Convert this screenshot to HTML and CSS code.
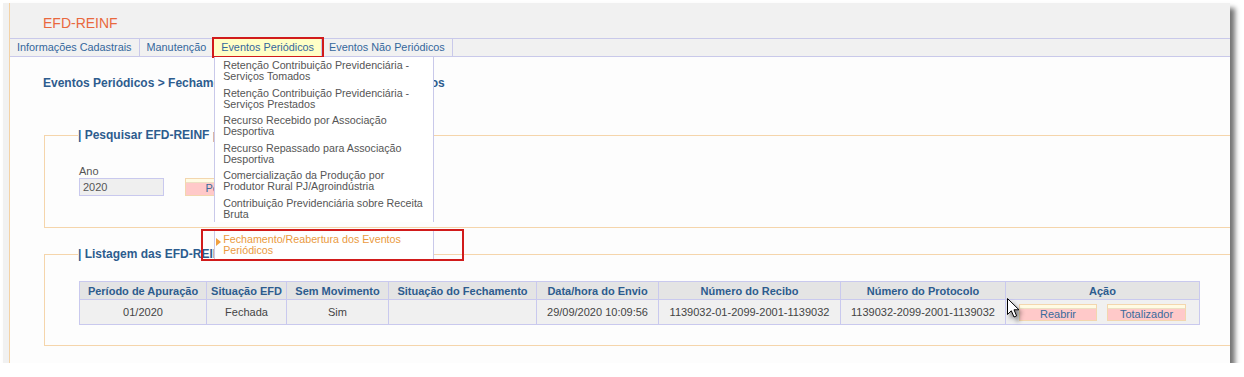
FILE: index.html
```html
<!DOCTYPE html>
<html lang="pt-BR">
<head>
  <meta charset="UTF-8">
  <title>EFD-REINF</title>
  <link rel="stylesheet" href="styles.css">
</head>
<body>
  <div class="janela">
    <div class="pagina">
      <div class="topo">EFD-REINF</div>

      <!-- menu principal -->
      <ul class="menu">
        <li>Informações Cadastrais</li>
        <li>Manutenção</li>
        <li class="ativo">Eventos Periódicos
          <ul class="submenu">
            <li>Retenção Contribuição Previdenciária -<br>Serviços Tomados</li>
            <li>Retenção Contribuição Previdenciária -<br>Serviços Prestados</li>
            <li>Recurso Recebido por Associação<br>Desportiva</li>
            <li>Recurso Repassado para Associação<br>Desportiva</li>
            <li>Comercialização da Produção por<br>Produtor Rural PJ/Agroindústria</li>
            <li>Contribuição Previdenciária sobre Receita<br>Bruta</li>
            <li class="atual">Fechamento/Reabertura dos Eventos<br>Periódicos</li>
          </ul>
        </li>
        <li>Eventos Não Periódicos</li>
      </ul>

      <div class="conteudo">
        <h2 class="trilha">Eventos Periódicos &gt; Fechamento/Reabertura dos Eventos Periódicos</h2>

        <fieldset class="quadro pesquisa">
          <legend>| Pesquisar EFD-REINF por Ano</legend>
          <div class="filtro">
            <label>Ano <input type="text" value="2020" readonly></label>
            <button class="botao largo">Pesquisar</button>
          </div>
        </fieldset>

        <fieldset class="quadro listagem">
          <legend>| Listagem das EFD-REINF</legend>
          <table class="lista">
            <colgroup>
              <col style="width: 127px">
              <col style="width: 80px">
              <col style="width: 102px">
              <col style="width: 148px">
              <col style="width: 122px">
              <col style="width: 182px">
              <col style="width: 165px">
              <col style="width: 194px">
            </colgroup>
            <thead>
              <tr>
                <th>Período de Apuração</th>
                <th>Situação EFD</th>
                <th>Sem Movimento</th>
                <th>Situação do Fechamento</th>
                <th>Data/hora do Envio</th>
                <th>Número do Recibo</th>
                <th>Número do Protocolo</th>
                <th>Ação</th>
              </tr>
            </thead>
            <tbody>
              <tr>
                <td>01/2020</td>
                <td>Fechada</td>
                <td>Sim</td>
                <td></td>
                <td>29/09/2020 10:09:56</td>
                <td>1139032-01-2099-2001-1139032</td>
                <td>1139032-2099-2001-1139032</td>
                <td class="acoes">
                  <button class="botao">Reabrir</button>
                  <button class="botao">Totalizador</button>
                </td>
              </tr>
            </tbody>
          </table>
        </fieldset>
      </div>
    </div>

    <!-- ponteiro do mouse -->
    <svg class="cursor" width="16" height="24" viewBox="0 0 16 24">
      <path d="M1.5 1.5 L1.5 17.5 L5.3 13.8 L8 20 L10.6 18.9 L8 12.8 L13 12.8 Z" fill="#fff" stroke="#000" stroke-width="1" stroke-linejoin="miter"/>
    </svg>
  </div>
</body>
</html>
```

FILE: styles.css
```css
* {
  box-sizing: border-box;
  margin: 0;
  padding: 0;
}

body {
  background: #ffffff;
  font-family: 'Liberation Sans', Arial, sans-serif;
  font-size: 11px;
}

/* janela com sombra */
.janela {
  position: relative;
  width: 1227px;
  height: 360px;
  margin: 3px 0 0 3px;
  padding-left: 6px;
  background: #f1f1f1;
  box-shadow: 5px 5px 5px rgba(0, 0, 0, 0.55);
}

.pagina {
  display: flex;
  flex-direction: column;
  height: 100%;
  border-left: 1px solid #f3d2a6;
}

.topo {
  height: 35px;
  line-height: 40px;
  padding-left: 33px;
  color: #e9683e;
  font-size: 14px;
}

/* menu */
.menu {
  display: flex;
  list-style: none;
  background: #f1f1f1;
  border-top: 1px solid #c9c9ea;
  border-bottom: 1px solid #c9c9ea;
  font-size: 10.85px;
}

.menu > li {
  position: relative;
  padding: 0 7px;
  line-height: 17px;
  color: #34679c;
  border-right: 1px solid #c9c9ea;
  white-space: nowrap;
}

.menu > li.ativo {
  background: #ffffc6;
  outline: 2px solid #d11b1b;
  z-index: 2;
}

.submenu {
  position: absolute;
  top: 18px;
  left: 0;
  width: 220px;
  list-style: none;
  z-index: 5;
  font-size: 10.7px;
}

.submenu li {
  padding: 3px 8px 2.5px;
  line-height: 11px;
  color: #555555;
  background: #ffffff;
  border-left: 1px solid #c9c9ea;
  border-right: 1px solid #c9c9ea;
}

.submenu li.atual {
  position: relative;
  margin-top: 8px;
  padding: 4px 8px 4px;
  color: #ea9a3e;
}

.submenu li.atual::before {
  content: '';
  position: absolute;
  left: 1px;
  top: 8px;
  border-left: 5px solid #f0a040;
  border-top: 4px solid transparent;
  border-bottom: 4px solid transparent;
}

.submenu li.atual::after {
  content: '';
  position: absolute;
  left: -14px;
  right: -31px;
  top: -1px;
  bottom: -1px;
  border: 2px solid #d11b1b;
}

/* conteudo */
.conteudo {
  flex: 1;
  background: #fdfdfd;
  padding: 18px 0 0 34px;
}

.trilha {
  margin-left: -1px;
  font-size: 12px;
  line-height: 16px;
  color: #2d5c8e;
}

.quadro {
  border: 1px solid #f5d5ab;
  border-right: none;
  padding: 0 0 0 34px;
}

.quadro legend {
  margin-left: -1px;
  font-size: 12px;
  font-weight: bold;
  line-height: 16px;
  color: #2d5c8e;
}

.pesquisa {
  margin-top: 36px;
  padding-top: 22px;
  padding-bottom: 31px;
}

.listagem {
  margin-top: 18px;
  padding-top: 19px;
  padding-bottom: 20px;
}

.filtro {
  display: flex;
  align-items: flex-end;
  gap: 21px;
}

.filtro label {
  display: flex;
  flex-direction: column;
  line-height: 13px;
  color: #555555;
}

.filtro input {
  width: 85px;
  height: 18px;
  padding: 0 3px;
  border: 1px solid #c9c9ee;
  background: #efefef;
  color: #555555;
  font: inherit;
}

.botao {
  height: 17px;
  width: 78px;
  border: 1px solid #f3d6ae;
  background: linear-gradient(#fffbe4 0 3px, #ece0c4 3px 4px, #ffc9c9 4px);
  color: #3a6b9c;
  font: inherit;
  line-height: 15px;
  padding-top: 2px;
}

.botao.largo {
  width: 90px;
  height: 18px;
}

/* tabela */
.lista {
  width: 1120px;
  table-layout: fixed;
  border-collapse: collapse;
}

.lista th,
.lista td {
  border: 1px solid #c9c9ee;
  text-align: center;
}

.lista th {
  height: 18px;
  background: #e4e4e4;
  color: #2d5c8e;
  font-weight: bold;
}

.lista td {
  height: 25px;
  background: #f0f0f0;
  color: #444444;
}

.lista td.acoes {
  font-size: 0;
}

.lista td.acoes .botao {
  font-size: 11px;
  margin: 0 5px;
}

.lista td.acoes .botao + .botao {
  width: 79px;
}

.cursor {
  position: absolute;
  left: 1003px;
  top: 294px;
  filter: drop-shadow(3px 4px 2px rgba(0, 0, 0, 0.45));
}
```
